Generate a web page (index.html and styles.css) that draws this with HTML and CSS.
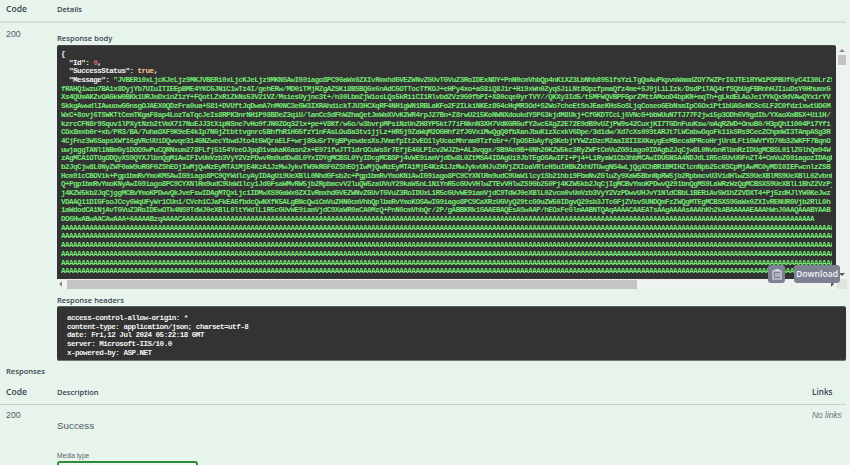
FILE: index.html
```html
<!DOCTYPE html>
<html lang="en">
<head>
<meta charset="utf-8">
<title>Responses</title>
<link rel="stylesheet" href="styles.css">
</head>
<body>
<main class="page">
  <div class="thead first"><div class="col-code">Code</div><div class="col-desc">Details</div></div>
  <div class="row">
    <div class="col-code status">200</div>
    <div class="col-main">
      <h5 class="label">Response body</h5>
      <div class="scroller">
        <div class="code-box">
<pre class="json"><span class="w">{</span>
  <span class="w">"Id"</span><span class="w">:</span> <span class="num">0</span><span class="w">,</span>
  <span class="w">"SuccessStatus"</span><span class="w">:</span> <span class="bool">true</span><span class="w">,</span>
  <span class="w">"Message"</span><span class="w">:</span> "JVBERi0xLjcKJeLjz9MKJVBERi0xLjcKJeLjz9MKNSAwIG9iago8PC9GaWx0ZXIvRmxhdGVEZWNvZGUvTGVuZ3RoIDExNDY+PnN0cmVhbQp4nK1X23LbNhb8951fsYzLTgQmAuPkpvmWamdZOY7WZPrI0JTE1RYWiPOPBUf6yC4I30LrZt
fRAHQ1wzu7BA1x8DyjYb7UIuITIEEpBME4YKCGJN1C1wTz4I/gehERw/MD0iTMjRZgAZSKi8BSBQGx6nAdCGOTTocTfKOJ+eHPy4xo+aS8iQ8J1r+Hi9xWn0ZyqSJiLNt8OpzfpmaQfz4me+SJ9jL1LIzk/DsdPiTAQ4rfSQbUgFBRnhHJIiuDsY0HhumxG
Xs4QUmAKZvOAGkW0BKk1URJmDxinZ1zY+FQotLZxRiZkNs53V21VZ/MsiesUyjnc3t+/n30LbmZjWiosLQs5kRiiCI1RlvbdZVz9G9fbPI+X80cqe0yrTVY//QKXy3Id5/t5MFWQVBPFGprZMttAMooD4bpKN+mqTh+gLkdELAoJeiYYkQx9dVAwQYx1rYV
SkkgAwwdlIAwuowGGnsgOJAEX0QDzFra0ua+S81+DVUftJqDwmA7nM0NC3eGW3IXRAhdickTJU3HCXqRF4NH1gWN1RBLaKFo2F2ILkiNKEz8G4cHqMR3Od+S2Wo7cheEtSnJEaeKHs5oSLjqCoseoGEbNsmIpC6OxiPt1bUASeNCSc6LF2C0fdz1xwtUO6M
WxC+8ovj6TSWKTtCemTKgaF8ap4LozTaTqcJeIs8RPK3nrNH1P98BDeZ3qiU/lanCcSdFhW2haQetJmWmXVvK2WR4rpJ27Bn+Z8rwU215KoNWNXdoukdYSP63kjdM8Ukj+CfGKDTCcLj6VNcG+bbWUuN7TJ77F2jwi5p3ODh6V9gdIb/YXaoXmB5X+Ui1H/
kzrcCFN8r9Squv1lPXytNzb2tVmX717NuEJJ3tXipNSne7vHo9fJN0ZOq32lx+pe+V8Kf/w6o/w3bvrpMPsiNzUnZH8YP5kt77iFNknN3XH7VdKGRGufY2wc5XgZ2E72E9dB9vUZjPW9s42CuxjKI7TGDnFuuKsw/mAqR2WD+OnuB0/H3pQh11004Pi7Yfi
COx8mxb0r+xb/PR3/BA/7uhaOXF9K9eE4kIp7NGjZtbttvgnrc5BhfhR1HG5fzY1nFAsLOu8a3tvijjLz+HR5j9ZaWqM2OGHhf2fJGVxiMwQgQ0fbXanJbuKizXcxkV6Dpe/3d1dw/Xd7cXs093tARJt7LWCabwOqoFk11kSRs9CecZChpmWI3TAnpASg3R
4CjFnz3W6SapsXWf16gVRcUUiDQwvqe314GNZwecYbwdJto4tGWQraELF+wrj8Gu5rTYgBPyewdesXsJVmefpIt2vEO1lyUcacMhram9Tzfo5r+/TpOSEbAyfq3KebjYYWZzDzcM2aaI8II8XKaygEeMBecaNPRcoHrjUrdLFt1GWVfYD70b32WKFF7BqnO
uwjaggTANl1NBmGy1DOO9wPuCQRNxum278FLfj5154YeeOJpqD1vakaK6asn2x+E971fwJTT1drOCuWsSr7EfjE4GLPIcv2WJZb+AL3vqgx/SB9An9B+0Nh20KZW5kc3RyZWFtCmVuZG9iago0IDAgb2JqCjw8L0NvbnRlbnRzIDUgMCBSL01lZGlhQm94W
zAgMCA1OTUgODQyXS9QYXJlbnQgMiAwIFIvUmVzb3VyY2VzPDwvRm9udDw8L0YxIDYgMCBSL0YyIDcgMCBSPj4vWE9iamVjdDw8L0ZtMSA4IDAgUi9JbTEgOSAwIFI+Pj4+L1RyaW1Cb3hbMCAwIDU5NSA4NDJdL1R5cGUvUGFnZT4+CmVuZG9iagozIDAgb
b2JqCjw8L0NyZWF0aW9uRGF0ZShEOjIwMjQwNzEyMTA1MjE4KzA1JzMwJykvTW9kRGF0ZShEOjIwMjQwNzEyMTA1MjE4KzA1JzMwJykvUHJvZHVjZXIoaVRleHSuIHBkZkhUTUwgNS4wLjQgXChBR1BMIHZlcnNpb25cKSCpMjAwMC0yMDI0IEFwcnlzZSB
Hcm91cCBOVik+Pgp1bmRvYmoKMSAwIG9iago8PC9QYWdlcyAyIDAgUi9UeXBlL0NhdGFsb2c+Pgp1bmRvYmoKNiAwIG9iago8PC9CYXNlRm9udC9UaW1lcy1Sb21hbi9FbmNvZGluZy9XaW5BbnNpRW5jb2RpbmcvU3VidHlwZS9UeXBlMS9UeXBlL0ZvbnQ
Q+Pgp1bmRvYmoKNyAwIG9iago8PC9CYXNlRm9udC9UaW1lcy1JdGFsaWMvRW5jb2RpbmcvV2luQW5zaUVuY29kaW5nL1N1YnR5cGUvVHlwZTEvVHlwZS9Gb250Pj4KZW5kb2JqCjIgMCBvYmoKPDwvQ291bnQgMS9LaWRzWzQgMCBSXS9UeXBlL1BhZ2VzPj4Kf
j4KZW5kb2JqCjggMCBvYmoKPDwvQkJveFswIDAgMTQxLjc1IDMwXS9GaWx0ZXIvRmxhdGVEZWNvZGUvTGVuZ3RoIDUxL1R5cGUvWE9iamVjdC9TdWJ0eXBlL0Zvcm0vUmVzb3VyY2VzPDwvUHJvY1NldCBbL1BERiAvSW1hZ2VDXT4+Pj5zdHJlYW0KeJwz
VDAAQ11DIGFsoJCcy6WqUFyWr1CUn1/CVch1CJaFkEA5fbdcQwNXfK5ALgBNcQwiCmVuZHN0cmVhbQplbmRvYmoKOSAwIG9iago8PC9CaXRzUGVyQ29tcG9uZW50IDgvQ29sb3JTcGFjZVsvSUNDQmFzZWQgMTEgMCBSXS9GaWx0ZXIvRENURGVjb2RlL0h
1aWdodCA1NjAvTGVuZ3RoIDEwOTk4NS9TdWJ0eXBlL0ltYWdlL1R5cGUvWE9iamVjdC9XaWR0aCA0MzQ+PnN0cmVhbQr/2P/gABBKRk1GAAEBAQEsASwAAP/hEOxFeGlmAABNTQAqAAAACAAEATsAAgAAAAsAAAhKh2kABAAAAAEAAAhWnJ0AAQAAABYAAB
DO6HwABwAACAwAAA+AAAAABzqAAAACAAAAAAAAAAAAAAAAAAAAAAAAAAAAAAAAAAAAAAAAAAAAAAAAAAAAAAAAAAAAAAAAAAAAAAAAAAAAAAAAAAAAAAAAAAAAAAAAAAAAAAAAAAAAAAAAAAAAAAAAAAAAAAAAAAAAAAAAAAAAAAAAAAAAAAAAAAAAA
AAAAAAAAAAAAAAAAAAAAAAAAAAAAAAAAAAAAAAAAAAAAAAAAAAAAAAAAAAAAAAAAAAAAAAAAAAAAAAAAAAAAAAAAAAAAAAAAAAAAAAAAAAAAAAAAAAAAAAAAAAAAAAAAAAAAAAAAAAAAAAAAAAAAAAAAAAAAAAAAAAAAAAAAAAAAAAAAAAAAAAAAAAAAAAAAAAAAAAAA
AAAAAAAAAAAAAAAAAAAAAAAAAAAAAAAAAAAAAAAAAAAAAAAAAAAAAAAAAAAAAAAAAAAAAAAAAAAAAAAAAAAAAAAAAAAAAAAAAAAAAAAAAAAAAAAAAAAAAAAAAAAAAAAAAAAAAAAAAAAAAAAAAAAAAAAAAAAAAAAAAAAAAAAAAAAAAAAAAAAAAAAAAAAAAAAAAAAAAAAA
AAAAAAAAAAAAAAAAAAAAAAAAAAAAAAAAAAAAAAAAAAAAAAAAAAAAAAAAAAAAAAAAAAAAAAAAAAAAAAAAAAAAAAAAAAAAAAAAAAAAAAAAAAAAAAAAAAAAAAAAAAAAAAAAAAAAAAAAAAAAAAAAAAAAAAAAAAAAAAAAAAAAAAAAAAAAAAAAAAAAAAAAAAAAAAAAAAAAAAAA
AAAAAAAAAAAAAAAAAAAAAAAAAAAAAAAAAAAAAAAAAAAAAAAAAAAAAAAAAAAAAAAAAAAAAAAAAAAAAAAAAAAAAAAAAAAAAAAAAAAAAAAAAAAAAAAAAAAAAAAAAAAAAAAAAAAAAAAAAAAAAAAAAAAAAAAAAAAAAAAAAAAAAAAAAAAAAAAAAAAAAAAAAAAAAAAAAAAAAAA
AAAAAAAAAAAAAAAAAAAAAAAAAAAAAAAAAAAAAAAAAAAAAAAAAAAAAAAAAAAAAAAAAAAAAAAAAAAAAAAAAAAAAAAAAAAAAAAAAAAAAAAAAAAAAAAAAAAAAAAAAAAAAAAAAAAAAAAAAAAAAAAAAAAAAAAAAAAAAAAAAAAAAAAAAAAAAAAAAAAAAAAAAAAAAAAAAAAA
AAAAAAAAAAAAAAAAAAAAAAAAAAAAAAAAAAAAAAAAAAAAAAAAAAAAAAAAAAAAAAAAAAAAAAAAAAAAAAAAAAAAAAAAAAAAAAAAAAAAAAAAAAAAAAAAAAAAAAAAAAAAAAAAAAAAAAAAAAAAAAAAAAAAAAAAAAAAAAAAAAAAAAAAAAAAAAAAAAAAAAAAAAAAAAAAAAAA</pre>
        </div>
        <div class="vbar"><span class="arrow-up"></span><span class="vthumb"></span><span class="arrow-down"></span></div>
        <div class="hbar"><span class="arrow-left"></span><span class="hthumb"></span><span class="arrow-right"></span></div>
        <div class="corner"></div>
        <div class="actions">
          <button class="btn copy" type="button" aria-label="Copy">
            <svg width="10" height="11" viewBox="0 0 10 11"><path d="M1 2h2V1h4v1h2v8H1z" fill="none" stroke="#e4e6ea" stroke-width="1.1"/><rect x="3.5" y="0.5" width="3" height="2" fill="#e4e6ea"/><path d="M3 5h5M3 7h5" stroke="#e4e6ea"/></svg>
          </button>
          <button class="btn download" type="button">Download</button>
        </div>
      </div>
      <h5 class="label headers-label">Response headers</h5>
      <pre class="headers">access-control-allow-origin: *
content-type: application/json; charset=utf-8
date: Fri,12 Jul 2024 05:22:18 GMT
server: Microsoft-IIS/10.0
x-powered-by: ASP.NET</pre>
    </div>
  </div>
  <h4 class="responses">Responses</h4>
  <div class="thead second"><div class="col-code">Code</div><div class="col-desc">Description</div><div class="col-links">Links</div></div>
  <div class="row last">
    <div class="col-code status">200</div>
    <div class="col-main">
      <p class="success">Success</p>
      <label class="media-label">Media type</label>
      <div class="media-select"></div>
    </div>
    <div class="col-links nolinks">No links</div>
  </div>
</main>
</body>
</html>
```
FILE: styles.css
```css
* { box-sizing: border-box; }
html, body { margin: 0; height: 465px; overflow: hidden; background: #e6f4ec; }
body { font-family: "Open Sans", "Liberation Sans", sans-serif; color: #3b4151; }
.page { padding: 0 4px 0 0; width: 850px; }
.thead { display: flex; align-items: center; border-bottom: 2px solid #d3e1da; font-weight: 600; }
.thead.first { height: 23px; padding-bottom: 3px; }
.thead.second { height: 24px; margin-top: 4px; border-bottom-width: 1px; border-color: #c6d4cd; padding-bottom: 2px; }
.col-code { width: 57px; padding-left: 6px; flex: none; font-size: 8.6px; }
.col-desc { flex: 1; font-size: 7.5px; }
.col-links { width: 34px; flex: none; font-size: 8.2px; }
.col-main { flex: 1; min-width: 0; }
.row { display: flex; }
.status { font-family: "Liberation Sans", sans-serif; font-weight: 400; font-size: 8.8px; color: #55596a; padding-top: 6px; }
.label { margin: 10px 0 1px; font-size: 7.6px; line-height: 10px; font-weight: 600; color: #3b4151; height: 11px; }
.headers-label { margin: 6px 0 0; height: 11px; }
.scroller { display: grid; grid-template-columns: 779px 1fr; grid-template-rows: 234px 10px; position: relative; }
.code-box { background: #333; border-radius: 2px 2px 0 0; padding: 4px 0 0 4px; overflow: hidden; border-top: 1px solid #4a4d4c; }
.json, .headers { margin: 0; font-family: "Liberation Mono", monospace; font-weight: 700; font-size: 7.6px; letter-spacing: -0.53px; line-height: 8.68px; color: #74e874; white-space: pre; }
.json { width: 771px; overflow: hidden; }
.w { color: #f2f2f2; }
.num { color: #d36363; }
.bool { color: #fcc28c; }
.vbar { margin-left: 1px; background: #eef3f0; display: flex; flex-direction: column; align-items: center; width: 10px; padding: 4px 0 3px; }
.arrow-up { width: 0; height: 0; border: 3px solid transparent; border-top: 0; border-bottom: 3px solid #8d8d8d; margin-bottom: 3px; }
.arrow-down { width: 0; height: 0; border: 3px solid transparent; border-bottom: 0; border-top: 3px solid #555; margin-top: auto; }
.vthumb { width: 8px; height: 10px; background: #c2c2c2; }
.hbar { display: flex; align-items: center; background: #eef3f0; height: 10px; padding: 0 2px; }
.arrow-left { width: 0; height: 0; border: 3px solid transparent; border-left: 0; border-right: 3px solid #8d8d8d; margin-right: 5px; }
.arrow-right { width: 0; height: 0; border: 3px solid transparent; border-right: 0; border-left: 3px solid #555; margin-left: auto; }
.hthumb { width: 570px; height: 9px; background: #c4c4c4; }
.corner { background: #dfe4e1; margin-left: 1px; width: 10px; }
.actions { position: absolute; left: 711px; top: 220px; display: flex; gap: 9px; }
.btn { border: 0; border-radius: 3px; background: #7d8293; color: #f2f3f5; height: 18px; padding: 0; font-family: "Open Sans", sans-serif; font-weight: 600; display: flex; align-items: center; justify-content: center; }
.copy { width: 17px; }
.download { width: 46px; font-size: 8.6px; }
.headers { background: #333; border-radius: 2px; height: 55px; padding: 7px 10px; width: 789px; color: #f2f2f2; border-top: 1px solid #5c5f5c; border-bottom: 1px solid #6f756f; }
.responses { margin: 4px 0 0 6px; font-size: 7.6px; font-weight: 600; line-height: 12px; height: 12px; }
.row.last .status { padding-top: 5px; }
.success { margin: 14px 0 0; font-family: "Liberation Sans", sans-serif; font-size: 9.8px; line-height: 14px; color: #55596a; }
.media-label { display: block; margin-top: 18px; font-family: "Liberation Sans", sans-serif; font-size: 6.6px; line-height: 9px; color: #5f6472; }
.media-select { margin-top: 1px; width: 141px; height: 20px; border: 2px solid #2f8a3c; border-radius: 3px; background: #eef7f2; }
.nolinks { font-family: "Liberation Sans", sans-serif; font-style: italic; font-size: 8.4px; color: #6b6f7b; padding-top: 5px; }
```
